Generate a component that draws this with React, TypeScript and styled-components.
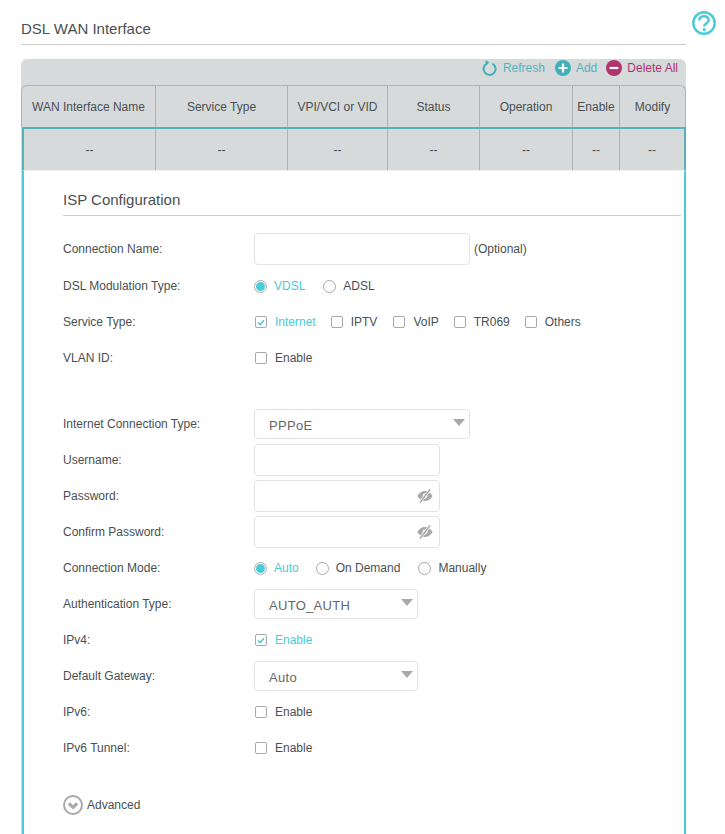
import React from "react";
import styled, { createGlobalStyle } from "styled-components";

const Global = createGlobalStyle`
  html, body { margin: 0; padding: 0; background: #fff; height: 834px; overflow: hidden; }
  body { font-family: "Liberation Sans", Arial, sans-serif; font-size: 12px; color: #4a4f52; }
`;

const Page = styled.div`
  position: relative;
  width: 665px;
  padding-left: 21px;
`;
const PageTitle = styled.h2`
  margin: 0;
  height: 44px;
  box-sizing: content-box;
  border-bottom: 1px solid #ccc;
  font-size: 15px;
  font-weight: 400;
  line-height: 58px;
  color: #4a4f52;
`;
const HelpIcon = styled.svg`
  position: absolute;
  left: 692px;
  top: 11px;
  width: 24px;
  height: 24px;
`;
const Card = styled.div`
  margin-top: 14px;
  background: #d6dadb;
  border-radius: 6px 6px 0 0;
`;
const Toolbar = styled.div`
  height: 18px;
  padding: 0 8px 8px 0;
  display: flex;
  justify-content: flex-end;
  align-items: center;
  gap: 9px;
`;
const ToolButton = styled.span<{ $tone: string }>`
  display: inline-flex;
  align-items: center;
  gap: 5px;
  color: ${(p) => p.$tone};
`;
const RefreshButton = styled(ToolButton)`
  gap: 6px;
  margin-right: 1px;
`;
const HeaderRow = styled.div`
  display: grid;
  grid-template-columns: 133px 132px 100px 92px 93px 47px 1fr;
  height: 42px;
  border: 1px solid #b0b3b4;
  border-bottom: 0;
  border-radius: 6px 6px 0 0;
  box-sizing: border-box;
`;
const HeaderCell = styled.div`
  display: flex;
  align-items: center;
  justify-content: center;
  border-left: 1px solid #b0b3b4;
  color: #4a4f52;
  white-space: nowrap;
  &:first-child { border-left: 0; }
`;
const DataRow = styled.div`
  display: grid;
  grid-template-columns: 131px 132px 100px 92px 93px 47px 1fr;
  height: 44px;
  box-sizing: border-box;
  margin-left: 1px;
  border-top: 2px solid #57b3ba;
  border-left: 2px solid #57b3ba;
  border-right: 2px solid #57b3ba;
  border-bottom: 1px solid #eef0f0;
  background: #d6dadb;
`;
const DataCell = styled(HeaderCell)`
  padding-top: 1px;
`;
const Panel = styled.div`
  background: #fff;
  margin-left: 1px;
  border-left: 2px solid #4acbd6;
  border-right: 2px solid #4acbd6;
  padding: 0 3px 0 39px;
  height: 670px;
`;
const SectionTitle = styled.h3`
  margin: 0 0 15px;
  height: 44px;
  border-bottom: 1px solid #ccc;
  font-size: 15px;
  font-weight: 400;
  line-height: 58px;
  color: #4a4f52;
`;
const Row = styled.div<{ $gapTop?: number }>`
  display: grid;
  grid-template-columns: 191px 1fr;
  align-items: center;
  height: 36px;
  margin-top: ${(p) => p.$gapTop ?? 0}px;
`;
const Label = styled.div`
  color: #4a4f52;
`;
const Controls = styled.div`
  display: flex;
  align-items: center;
`;
const InputBox = styled.div<{ $w: number }>`
  position: relative;
  box-sizing: border-box;
  width: ${(p) => p.$w}px;
  height: 32px;
  border: 1px solid #e3e3e3;
  border-radius: 4px;
  background: #fff;
`;
const EyeIcon = styled.svg`
  position: absolute;
  right: 6px;
  top: 7px;
  width: 16px;
  height: 16px;
`;
const SelectBox = styled.div<{ $w: number }>`
  position: relative;
  box-sizing: border-box;
  width: ${(p) => p.$w}px;
  height: 30px;
  border: 1px solid #e3e3e3;
  border-radius: 4px;
  padding-left: 14px;
  padding-top: 2px;
  display: flex;
  align-items: center;
  font-size: 13px;
  letter-spacing: 0.3px;
  color: #666;
  &::after {
    content: "";
    position: absolute;
    right: 4px;
    top: 9px;
    border-left: 6px solid transparent;
    border-right: 6px solid transparent;
    border-top: 7px solid #a7a9aa;
  }
`;
const Hint = styled.span`
  margin-left: 4px;
`;
const Option = styled.label<{ $on?: boolean; $gap: number }>`
  display: inline-flex;
  align-items: center;
  margin-right: ${(p) => p.$gap}px;
  color: ${(p) => (p.$on ? "#4acbd6" : "#4a4f52")};
`;
const RadioMark = styled.span<{ $on?: boolean }>`
  box-sizing: border-box;
  width: 13px;
  height: 13px;
  margin-right: 7px;
  border: 1px solid #a9a9a9;
  border-radius: 50%;
  display: inline-flex;
  align-items: center;
  justify-content: center;
  &::after {
    content: "";
    width: 9px;
    height: 9px;
    border-radius: 50%;
    background: ${(p) => (p.$on ? "#4acbd6" : "transparent")};
  }
`;
const CheckMark = styled.span`
  box-sizing: border-box;
  width: 12px;
  height: 12px;
  margin: 0 8px 0 1px;
  border: 1px solid #a9a9a9;
  border-radius: 2px;
  display: inline-flex;
  align-items: center;
  justify-content: center;
`;
const AdvancedRow = styled.div`
  display: flex;
  align-items: center;
  gap: 4px;
  margin-top: 21px;
  height: 36px;
  color: #4a4f52;
`;

const Radio = ({ on, gap, children }: { on?: boolean; gap: number; children: string }) => (
  <Option $on={on} $gap={gap}>
    <RadioMark $on={on} />
    {children}
  </Option>
);
const Check = ({ on, gap, children }: { on?: boolean; gap: number; children: string }) => (
  <Option $on={on} $gap={gap}>
    <CheckMark>
      {on && (
        <svg width="8" height="7" viewBox="0 0 8 7">
          <path d="M1 3.5 3.2 5.6 7 1.2" fill="none" stroke="#4acbd6" strokeWidth="1.5" />
        </svg>
      )}
    </CheckMark>
    {children}
  </Option>
);
const Eye = () => (
  <EyeIcon viewBox="0 0 16 16">
    <path d="M0.3 8C2.5 4.6 5 3 8 3S13.5 4.6 15.7 8C13.5 11.4 11 13 8 13S2.5 11.4 0.3 8Z" fill="#a8a8a8" />
    <circle cx="8" cy="8" r="2.4" fill="#fff" />
    <path d="M2.6 14.6 13.4 1.4" stroke="#fff" strokeWidth="3" />
    <path d="M3 14.5 13 1.5" stroke="#a8a8a8" strokeWidth="1.5" />
  </EyeIcon>
);

const headers = ["WAN Interface Name", "Service Type", "VPI/VCI or VID", "Status", "Operation", "Enable", "Modify"];

export default function App() {
  return (
    <Page>
      <Global />
      <PageTitle>DSL WAN Interface</PageTitle>
      <HelpIcon viewBox="0 0 24 24">
        <circle cx="12" cy="12" r="10.7" fill="none" stroke="#4acbd6" strokeWidth="2.5" />
        <path d="M7.3 9.4C7.3 6.8 9.4 5.2 12 5.2S16.7 6.8 16.7 9.2C16.7 12.4 12.2 12.2 12.2 15.4" fill="none" stroke="#4acbd6" strokeWidth="2.5" />
        <circle cx="12.2" cy="18.6" r="1.6" fill="#4acbd6" />
      </HelpIcon>
      <Card>
        <Toolbar>
          <RefreshButton $tone="#4fb5bd">
            <svg width="15" height="17" viewBox="0 0 15 17">
              <path d="M4.8 3.6A6 6 0 1 0 10.4 3.6" fill="none" stroke="#42b0ba" strokeWidth="2" />
              <path d="M3.4 0 7.4 2.6 3.8 5.6Z" fill="#42b0ba" />
            </svg>
            Refresh
          </RefreshButton>
          <ToolButton $tone="#4fb5bd">
            <svg width="16" height="16" viewBox="0 0 16 16">
              <circle cx="8" cy="8" r="8" fill="#42b0ba" />
              <path d="M8 3.6V12.4M3.6 8H12.4" stroke="#fff" strokeWidth="2.2" />
            </svg>
            Add
          </ToolButton>
          <ToolButton $tone="#b0306f">
            <svg width="16" height="16" viewBox="0 0 16 16">
              <circle cx="8" cy="8" r="8" fill="#b0356f" />
              <path d="M3.6 8H12.4" stroke="#fff" strokeWidth="2.2" />
            </svg>
            Delete All
          </ToolButton>
        </Toolbar>
        <HeaderRow>
          {headers.map((h) => (
            <HeaderCell key={h}>{h}</HeaderCell>
          ))}
        </HeaderRow>
        <DataRow>
          {headers.map((h) => (
            <DataCell key={h}>--</DataCell>
          ))}
        </DataRow>
        <Panel>
          <SectionTitle>ISP Configuration</SectionTitle>
          <Row>
            <Label>Connection Name:</Label>
            <Controls>
              <InputBox $w={216} />
              <Hint>(Optional)</Hint>
            </Controls>
          </Row>
          <Row $gapTop={1}>
            <Label>DSL Modulation Type:</Label>
            <Controls>
              <Radio on gap={18}>VDSL</Radio>
              <Radio gap={0}>ADSL</Radio>
            </Controls>
          </Row>
          <Row>
            <Label>Service Type:</Label>
            <Controls>
              <Check on gap={14}>Internet</Check>
              <Check gap={15}>IPTV</Check>
              <Check gap={14}>VoIP</Check>
              <Check gap={14}>TR069</Check>
              <Check gap={0}>Others</Check>
            </Controls>
          </Row>
          <Row>
            <Label>VLAN ID:</Label>
            <Controls>
              <Check gap={0}>Enable</Check>
            </Controls>
          </Row>
          <Row $gapTop={30}>
            <Label>Internet Connection Type:</Label>
            <Controls>
              <SelectBox $w={216}>PPPoE</SelectBox>
            </Controls>
          </Row>
          <Row>
            <Label>Username:</Label>
            <Controls>
              <InputBox $w={186} />
            </Controls>
          </Row>
          <Row>
            <Label>Password:</Label>
            <Controls>
              <InputBox $w={186}><Eye /></InputBox>
            </Controls>
          </Row>
          <Row>
            <Label>Confirm Password:</Label>
            <Controls>
              <InputBox $w={186}><Eye /></InputBox>
            </Controls>
          </Row>
          <Row>
            <Label>Connection Mode:</Label>
            <Controls>
              <Radio on gap={17}>Auto</Radio>
              <Radio gap={18}>On Demand</Radio>
              <Radio gap={0}>Manually</Radio>
            </Controls>
          </Row>
          <Row>
            <Label>Authentication Type:</Label>
            <Controls>
              <SelectBox $w={164}>AUTO_AUTH</SelectBox>
            </Controls>
          </Row>
          <Row>
            <Label>IPv4:</Label>
            <Controls>
              <Check on gap={0}>Enable</Check>
            </Controls>
          </Row>
          <Row>
            <Label>Default Gateway:</Label>
            <Controls>
              <SelectBox $w={164}>Auto</SelectBox>
            </Controls>
          </Row>
          <Row>
            <Label>IPv6:</Label>
            <Controls>
              <Check gap={0}>Enable</Check>
            </Controls>
          </Row>
          <Row>
            <Label>IPv6 Tunnel:</Label>
            <Controls>
              <Check gap={0}>Enable</Check>
            </Controls>
          </Row>
          <AdvancedRow>
            <svg width="20" height="20" viewBox="0 0 20 20">
              <circle cx="10" cy="10" r="9" fill="#fff" stroke="#a9a9a9" strokeWidth="2" />
              <path d="M5.8 8.4 10 12.4 14.2 8.4" fill="none" stroke="#a9a9a9" strokeWidth="3.2" />
            </svg>
            Advanced
          </AdvancedRow>
        </Panel>
      </Card>
    </Page>
  );
}
